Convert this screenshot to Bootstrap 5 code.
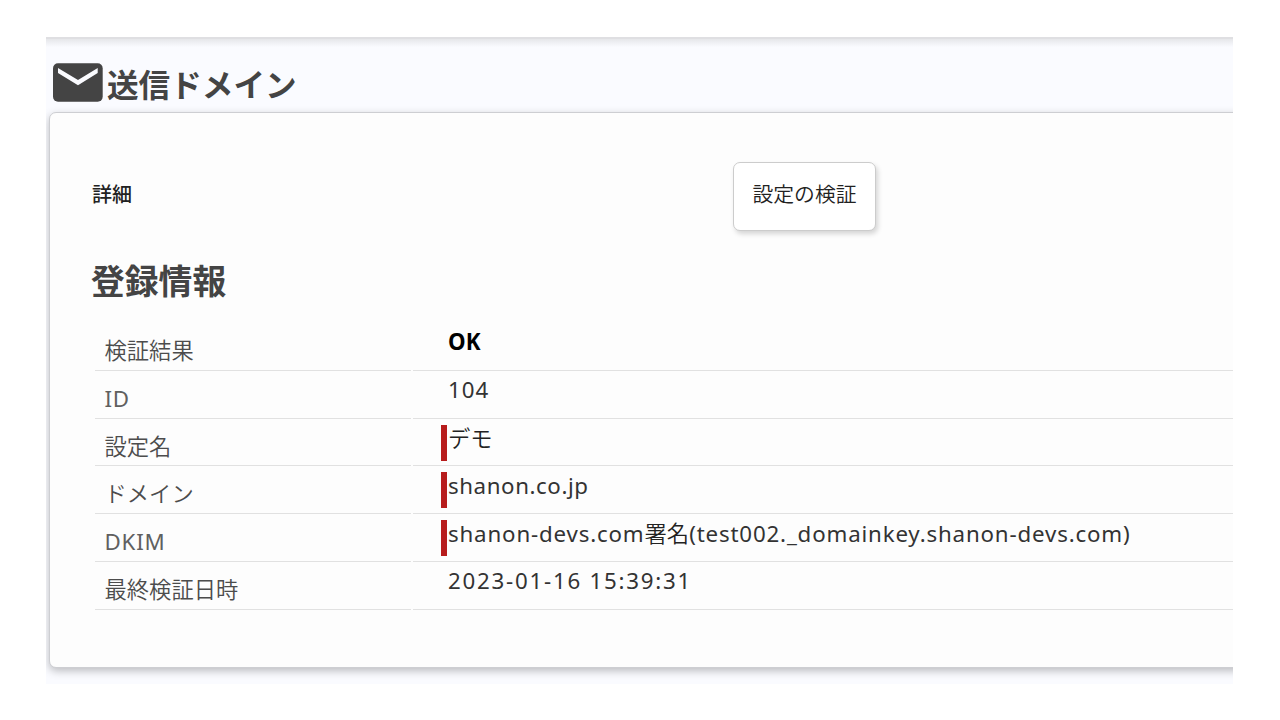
<!DOCTYPE html>
<html lang="ja">
<head>
<meta charset="utf-8">
<meta name="viewport" content="width=device-width, initial-scale=1">
<title>送信ドメイン</title>
<link href="https://cdn.jsdelivr.net/npm/bootstrap@5.3.0/dist/css/bootstrap.min.css" rel="stylesheet">
<style>
body{background:#fff;font-family:"Noto Sans","Noto Sans CJK JP",sans-serif;color:#222;overflow:hidden}
.page-area{margin:37px 47px 0 46px;height:647px;background:linear-gradient(#e6e7ea,#fafbff 8px);border-top:2px solid #dfdfe2;clip-path:inset(0)}
.page-title{height:73px;padding:24px 0 0 7px;gap:4px}
.page-title h1{font-size:31.6px;line-height:46px;font-weight:700;color:#444;margin:-1px 0 0}
.panel{margin:0 -12px 0 3px;height:556px;border:1px solid #cdced2;border-radius:7px 0 0 7px;background:#fdfdfd;box-shadow:0 3px 8px rgba(0,0,0,.25);padding:49px 0 0 41px}
.detail-bar{height:69px}
.detail-name{width:642px;font-size:20px;font-weight:500;margin-top:-4px;padding-left:1px}
.verify-btn{width:143px;height:69px;background:#fff;border:1.5px solid #ccc;border-radius:7px;box-shadow:2px 3px 5px rgba(0,0,0,.16);font-size:20.8px;color:#222;padding:0 0 4px;font-weight:350}
.panel h2{font-size:33.8px;line-height:50px;font-weight:700;color:#444;margin:25px 0 17.4px}
.info{margin-left:4px;display:grid;grid-template-columns:316px 1fr;column-gap:2px;grid-auto-rows:47.7px;font-size:22.3px;line-height:32px}
.info>*{border-bottom:1.5px solid #e1e1e1;margin:0}
.info dt{font-weight:350;color:#4c4c4c;padding:12px 0 0 9.5px}
.info dt.latin{font-weight:400;color:#606060;letter-spacing:.8px}
.info dd{padding:3px 0 0 35px;color:#333;letter-spacing:.58px}
.info dd.result{letter-spacing:0}
.info dd.digits{letter-spacing:1px}
.info dd.datetime{letter-spacing:1.75px}
.info dd.signature{letter-spacing:.83px}
.info dd.required{padding-left:28px}
.info dd.required>span{display:block;border-left:6px solid #b71c1c;padding-left:1px;height:36px;margin-top:3px;line-height:27px}
.info .kana{font-weight:350;letter-spacing:0;color:#222}
</style>
</head>
<body>
<main class="page-area">
  <header class="page-title d-flex align-items-start">
    <svg width="50" height="39" viewBox="0 0 50 39" aria-hidden="true"><rect width="49.7" height="38.6" y=".2" rx="5" fill="#444"/><path d="M5 5L25 17L44.7 5V9.9L25 22.3L5 9.9Z" fill="#fafbff"/></svg>
    <h1>送信ドメイン</h1>
  </header>
  <section class="panel">
    <div class="detail-bar d-flex align-items-center">
      <div class="detail-name">詳細</div>
      <button class="btn verify-btn" type="button">設定の検証</button>
    </div>
    <h2>登録情報</h2>
    <dl class="info mb-0">
      <dt>検証結果</dt><dd class="result fw-bold text-black">OK</dd>
      <dt class="latin">ID</dt><dd class="digits">104</dd>
      <dt>設定名</dt><dd class="required"><span class="kana">デモ</span></dd>
      <dt>ドメイン</dt><dd class="required"><span>shanon.co.jp</span></dd>
      <dt class="latin">DKIM</dt><dd class="required signature"><span>shanon-devs.com<span class="kana">署名</span>(test002._domainkey.shanon-devs.com)</span></dd>
      <dt>最終検証日時</dt><dd class="datetime">2023-01-16 15:39:31</dd>
    </dl>
  </section>
</main>
<script src="https://cdn.jsdelivr.net/npm/bootstrap@5.3.0/dist/js/bootstrap.bundle.min.js"></script>
</body>
</html>
